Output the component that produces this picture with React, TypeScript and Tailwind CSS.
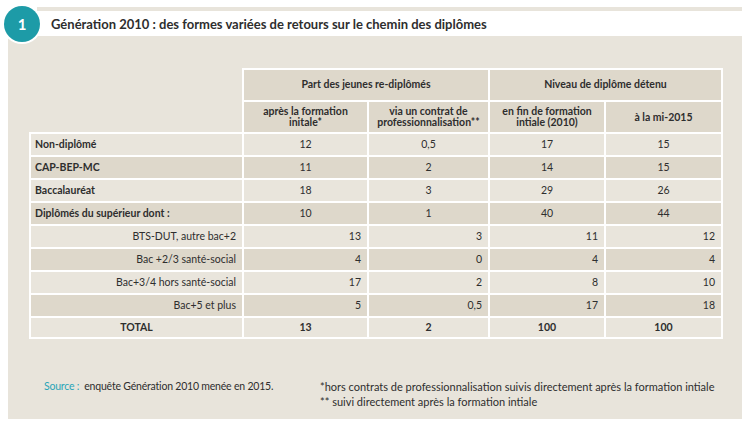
import React from "react";

const font = { fontFamily: "Lato, 'Open Sans', sans-serif" };

type Row = { label: string; vals: string[]; kind: "main" | "sub" | "total"; dark: boolean };

const rows: Row[] = [
  { label: "Non-diplômé", vals: ["12", "0,5", "17", "15"], kind: "main", dark: false },
  { label: "CAP-BEP-MC", vals: ["11", "2", "14", "15"], kind: "main", dark: true },
  { label: "Baccalauréat", vals: ["18", "3", "29", "26"], kind: "main", dark: false },
  { label: "Diplômés du supérieur dont :", vals: ["10", "1", "40", "44"], kind: "main", dark: true },
  { label: "BTS-DUT, autre bac+2", vals: ["13", "3", "11", "12"], kind: "sub", dark: false },
  { label: "Bac +2/3 santé-social", vals: ["4", "0", "4", "4"], kind: "sub", dark: true },
  { label: "Bac+3/4 hors santé-social", vals: ["17", "2", "8", "10"], kind: "sub", dark: false },
  { label: "Bac+5 et plus", vals: ["5", "0,5", "17", "18"], kind: "sub", dark: true },
  { label: "TOTAL", vals: ["13", "2", "100", "100"], kind: "total", dark: false },
];

export default function App() {
  return (
    <div className="relative w-[749px] h-[427px] bg-white text-[#2e2e2e]" style={font}>
      <div className="pt-[7px] pl-[37px]">
        <div className="w-[705px] h-[4px] bg-[#e8e4db]" />
      </div>
      <div className="h-[25px] pl-[51px] pt-[2px] flex items-center text-[13px] font-bold">
        Génération 2010 : des formes variées de retours sur le chemin des diplômes
      </div>
      <div className="absolute left-[2px] top-[4px] w-[40px] h-[40px] rounded-full bg-white p-[2px]">
        <div className="w-full h-full rounded-full bg-[#1d9ba7] flex items-center justify-center text-white font-bold text-[15px]">
          1
        </div>
      </div>
      <div className="ml-[8px] w-[734px] h-[383px] bg-[#e8e4db] pt-[32px] pl-[21px]">
        <table className="table-fixed border-collapse text-[10.5px]">
          <colgroup>
            <col className="w-[213px]" />
            <col className="w-[125px]" />
            <col className="w-[121px]" />
            <col className="w-[116px]" />
            <col className="w-[117px]" />
          </colgroup>
          <thead>
            <tr className="h-[32px]">
              <th className="border-r-2 border-white" />
              <th colSpan={2} className="bg-[#ded8cb] border-2 border-white font-bold text-center">
                Part des jeunes re-diplômés
              </th>
              <th colSpan={2} className="bg-[#ded8cb] border-2 border-white font-bold text-center">
                Niveau de diplôme détenu
              </th>
            </tr>
            <tr className="h-[32px]">
              <th className="border-r-2 border-b-2 border-white" />
              <th className="bg-[#ded8cb] border-2 border-white font-bold text-center leading-[11px]">
                après la formation
                <br />
                initale*
              </th>
              <th className="bg-[#ded8cb] border-2 border-white font-bold text-center leading-[11px]">
                via un contrat de
                <br />
                professionnalisation**
              </th>
              <th className="bg-[#ded8cb] border-2 border-white font-bold text-center leading-[11px]">
                en fin de formation
                <br />
                intiale (2010)
              </th>
              <th className="bg-[#ded8cb] border-2 border-white font-bold text-center leading-[11px]">
                à la mi-2015
              </th>
            </tr>
          </thead>
          <tbody>
            {rows.map((r, i) => (
              <tr key={i} className={(i === rows.length - 1 ? "h-[21px] " : "h-[23px] ") + (r.dark ? "bg-[#ded8cb]" : "bg-[#e9e5dc]")}>
                <td
                  className={
                    "border-2 border-white " +
                    (r.kind === "main"
                      ? "font-bold text-left pl-[4px]"
                      : r.kind === "sub"
                      ? "text-right pr-[6px]"
                      : "font-bold text-center")
                  }
                >
                  {r.label}
                </td>
                {r.vals.map((v, j) => (
                  <td
                    key={j}
                    className={
                      "border-2 border-white " +
                      (r.kind === "sub" ? "text-right pr-[6px]" : "text-center") +
                      (r.kind === "total" ? " font-bold" : "")
                    }
                  >
                    {v}
                  </td>
                ))}
              </tr>
            ))}
          </tbody>
        </table>
        <div className="mt-[40px] flex">
          <div className="w-[291px] pl-[15px] text-[10.5px] tracking-[-0.2px]">
            <span className="text-[#2aa4b8]">Source :</span>&nbsp; enquête Génération 2010 menée en 2015.
          </div>
          <div className="leading-[16px] text-[11px]">
            <div>*hors contrats de professionnalisation suivis directement après la formation intiale</div>
            <div className="-mt-[1px]">** suivi directement après la formation intiale</div>
          </div>
        </div>
      </div>
    </div>
  );
}
